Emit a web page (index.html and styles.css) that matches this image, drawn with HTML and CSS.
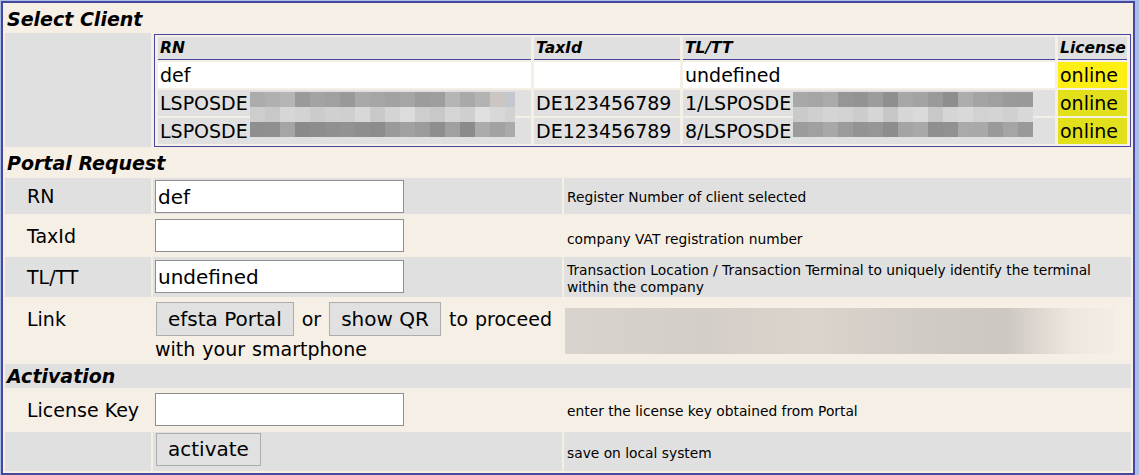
FILE: index.html
```html
<!DOCTYPE html>
<html lang="en">
<head>
  <meta charset="UTF-8">
  <title>Client License</title>
  <link rel="stylesheet" href="styles.css">
</head>
<body>

  <div class="panel">
    <table class="form-table">
      <colgroup>
        <col class="col-label">
        <col class="col-input">
        <col>
      </colgroup>
      <tr class="section first">
        <td colspan="3">Select Client</td>
      </tr>
      <tr>
        <td class="label"></td>
        <td colspan="2" class="clients-cell">
          <table class="clients">
            <thead>
              <tr>
                <th class="th-rn">RN</th>
                <th class="th-tax">TaxId</th>
                <th class="th-tl">TL/TT</th>
                <th>License</th>
              </tr>
            </thead>
            <tbody>
              <tr class="selected">
                <td>def</td>
                <td></td>
                <td>undefined</td>
                <td class="lic">online</td>
              </tr>
              <tr>
                <td>LSPOSDE<span class="mosaic rn-a"></span></td>
                <td>DE123456789</td>
                <td>1/LSPOSDE<span class="mosaic tl-a"></span></td>
                <td class="lic">online</td>
              </tr>
              <tr>
                <td>LSPOSDE<span class="mosaic rn-b"></span></td>
                <td>DE123456789</td>
                <td>8/LSPOSDE<span class="mosaic tl-b"></span></td>
                <td class="lic">online</td>
              </tr>
            </tbody>
          </table>
        </td>
      </tr>

      <tr class="section">
        <td colspan="3">Portal Request</td>
      </tr>
      <tr class="short">
        <td class="label">RN</td>
        <td class="field"><input type="text" value="def"></td>
        <td class="desc">Register Number of client selected</td>
      </tr>
      <tr>
        <td class="label">TaxId</td>
        <td class="field"><input type="text"></td>
        <td class="desc low">company VAT registration number</td>
      </tr>
      <tr class="tall">
        <td class="label">TL/TT</td>
        <td class="field"><input type="text" value="undefined"></td>
        <td class="desc">Transaction Location / Transaction Terminal to uniquely identify the terminal<br>within the company</td>
      </tr>
      <tr class="link-row">
        <td class="label">Link</td>
        <td class="field"><button type="button">efsta Portal</button> or <button type="button">show QR</button> to proceed with your smartphone</td>
        <td class="desc"><div class="qr-link"></div></td>
      </tr>

      <tr class="section last">
        <td colspan="3">Activation</td>
      </tr>
      <tr class="tall">
        <td class="label">License Key</td>
        <td class="field"><input type="text"></td>
        <td class="desc">enter the license key obtained from Portal</td>
      </tr>
      <tr class="save-row">
        <td class="label"></td>
        <td class="field"><button type="button" class="activate">activate</button></td>
        <td class="desc">save on local system</td>
      </tr>
    </table>
  </div>

</body>
</html>
```

FILE: styles.css
```css
body {
  margin: 0;
  padding: 1px 4px 1px 1px;
  background-color: #a9bfe8;
  font-family: "DejaVu Sans", Verdana, sans-serif;
  font-size: 19px;
  color: #000;
}

.panel {
  border: 2px solid #47479d;
  background-color: #f6efe6;
}

.form-table {
  width: 100%;
  table-layout: fixed;
  border-spacing: 2px;
}

.col-label {
  width: 146px;
}

.col-input {
  width: 409px;
}

.form-table > tbody > tr > td {
  padding: 0;
}

.form-table > tbody > tr:nth-child(even) > td {
  background-color: #e0e0e0;
}

/* section headings */
.form-table > tbody > tr.section > td {
  font-size: 19px;
  font-weight: bold;
  font-style: italic;
  line-height: 23px;
  padding: 3px 2px 1px;
}

.form-table > tbody > tr.section.first > td {
  padding-bottom: 0;
}

.form-table > tbody > tr.section.last > td {
  padding-top: 1px;
  padding-bottom: 0;
}

.form-table > tbody > tr > td.label {
  padding-left: 22px;
}

.form-table > tbody > tr > td.field {
  padding: 3px 2px;
}

.form-table > tbody > tr.short > td.field {
  padding: 2px 2px 1px;
}

.form-table > tbody > tr.tall > td.field {
  padding: 3px 2px 4px;
}

.form-table > tbody > tr.save-row > td.field {
  padding: 1px 2px 5px;
}

.form-table > tbody > tr > td.desc {
  font-size: 13.8px;
  line-height: 17px;
  padding: 3px 3px 0;
}

.form-table > tbody > tr > td.desc.low {
  padding-top: 7px;
}

input {
  display: block;
  box-sizing: border-box;
  width: 249px;
  height: 33px;
  margin: 0;
  padding: 0 2px;
  border: 1px solid #8f8f8f;
  background-color: white;
  font-family: "DejaVu Sans", Verdana, sans-serif;
  font-size: 20px;
  color: #000;
}

button {
  box-sizing: border-box;
  height: 33px;
  margin: 0 1px;
  padding: 0 11px;
  border: 1px solid #adadad;
  background-color: #e1e1e1;
  font-family: "DejaVu Sans", Verdana, sans-serif;
  font-size: 20px;
  line-height: 31px;
  color: #000;
}

.activate {
  display: block;
}

.link-row > td.label {
  vertical-align: baseline;
}

.form-table > tbody > tr.link-row > td.field {
  vertical-align: baseline;
  line-height: 26px;
  word-spacing: 1px;
  padding: 3px 2px 0;
}

.link-row button {
  height: 34px;
  line-height: 33px;
}

.form-table > tbody > tr.link-row > td.desc {
  padding: 0 0 0 1px;
}

.qr-link {
  width: 550px;
  height: 46px;
  background: linear-gradient(90deg, #d8d3cd 0%, #d4cec8 25%, #dbd4cc 45%, #d2ccc6 62%, #ccc7c1 80%, #eee7df 92%, #f4ede5 100%);
}

/* client list */
.form-table > tbody > tr > td.clients-cell {
  background-color: transparent;
  padding: 1px 0 0 1px;
}

.clients {
  width: 100%;
  table-layout: fixed;
  border: 1px solid #47479d;
  border-spacing: 3px 2px;
}

.clients th {
  box-sizing: border-box;
  background-color: #e0e0e0;
  border-bottom: 1px solid #47479d;
  text-align: left;
  font-size: 15.5px;
  font-style: italic;
  line-height: 22px;
  padding: 0 2px;
}

.th-rn {
  width: 373px;
}

.th-tax {
  width: 146px;
}

.th-tl {
  width: 372px;
}

.clients td {
  background-color: #e0e0e0;
  line-height: 26px;
  padding: 0 2px;
  white-space: nowrap;
  vertical-align: top;
}

.clients tr.selected td {
  background-color: white;
}

.clients td.lic {
  background-color: #e2e01a;
}

.clients tr.selected td.lic {
  background-color: #fdee14;
}

.mosaic {
  display: inline-block;
  vertical-align: top;
  margin-left: 2px;
  background-repeat: no-repeat;
}

.rn-a,
.tl-a {
  height: 30px;
  margin-top: 2px;
  margin-bottom: -6px;
  background-size: 100% 15px;
  background-position: 0 0, 0 15px;
}

.rn-b,
.tl-b {
  height: 15px;
  margin-top: 4px;
}

.rn-a,
.rn-b {
  width: 265px;
}

.tl-a,
.tl-b {
  width: 240px;
}

.rn-a {
  background-image:
    linear-gradient(90deg, #acacac 0 15px, #b0b0b0 15px 30px, #b5b5b5 30px 45px, #9a9a9a 45px 60px, #a3a3a3 60px 75px, #a0a0a0 75px 90px, #999 90px 105px, #a9a9a9 105px 120px, #a6a6a6 120px 135px, #a2a2a2 135px 150px, #a6a6a6 150px 165px, #9c9c9c 165px 180px, #9e9e9e 180px 195px, #b5b5b5 195px 210px, #a9a9a9 210px 225px, #b3b3b3 225px 240px, #cbc6c1 240px 255px, #c4c7cf 255px),
    linear-gradient(90deg, #cdcdcd 0 15px, #c8c8c8 15px 30px, #d6d6d6 30px 45px, #d3d3d3 45px 60px, #cbcbcb 60px 75px, #d0d0d0 75px 90px, #cfcfcf 90px 105px, #d8d8d8 105px 120px, #c9c9c9 120px 135px, #d4d4d4 135px 150px, #dcdcdc 150px 165px, #cdcdcd 165px 180px, #c8c8c8 180px 195px, #d5d5d5 195px 210px, #cfcfcf 210px 225px, #e0e0e0 225px 240px, #d8d8d8 240px 255px, #d2d2d2 255px);
}

.rn-b {
  background-image: linear-gradient(90deg, #8f8f8f 0 15px, #909090 15px 30px, #a5a5a5 30px 45px, #8a8a8a 45px 60px, #8d8d8d 60px 75px, #909090 75px 90px, #929292 90px 105px, #8e8e8e 105px 120px, #8c8c8c 120px 135px, #9a9a9a 135px 150px, #a1a1a1 150px 165px, #9b9b9b 165px 180px, #8e8e8e 180px 195px, #a0a0a0 195px 210px, #8b8b8b 210px 225px, #ababab 225px 240px, #a2a2a2 240px 255px, #aaa 255px);
}

.tl-a {
  background-image:
    linear-gradient(90deg, #a8a8a8 0 15px, #a5a5a5 15px 30px, #aaa 30px 45px, #969696 45px 60px, #939393 60px 75px, #9c9c9c 75px 90px, #8f8f8f 90px 105px, #a7a7a7 105px 120px, #a3a3a3 120px 135px, #9a9a9a 135px 150px, #8e8e8e 150px 165px, #adadad 165px 180px, #a4a4a4 180px 195px, #a0a0a0 195px 210px, #9a9a9a 210px 225px, #999 225px),
    linear-gradient(90deg, #cacaca 0 15px, #cfcfcf 15px 30px, #d4d4d4 30px 45px, #d2d2d2 45px 60px, #ccc 60px 75px, #d6d6d6 75px 90px, #c7c7c7 90px 105px, #d6d6d6 105px 120px, #dadada 120px 135px, #c8c8c8 135px 150px, #d5d5d5 150px 165px, #d9d9d9 165px 180px, #d2d2d2 180px 195px, #d4d4d4 195px 210px, #d0d0d0 210px 225px, #d8d8d8 225px);
}

.tl-b {
  background-image: linear-gradient(90deg, #9c9c9c 0 15px, #a0a0a0 15px 30px, #a8a8a8 30px 45px, #9b9b9b 45px 60px, #939393 60px 75px, #969696 75px 90px, #8d8d8d 90px 105px, #a4a4a4 105px 120px, #a8a8a8 120px 135px, #8f8f8f 135px 150px, #919191 150px 165px, #aaa 165px 180px, #a9a9a9 180px 195px, #9a9a9a 195px 210px, #a5a5a5 210px 225px, #999 225px);
}
```
